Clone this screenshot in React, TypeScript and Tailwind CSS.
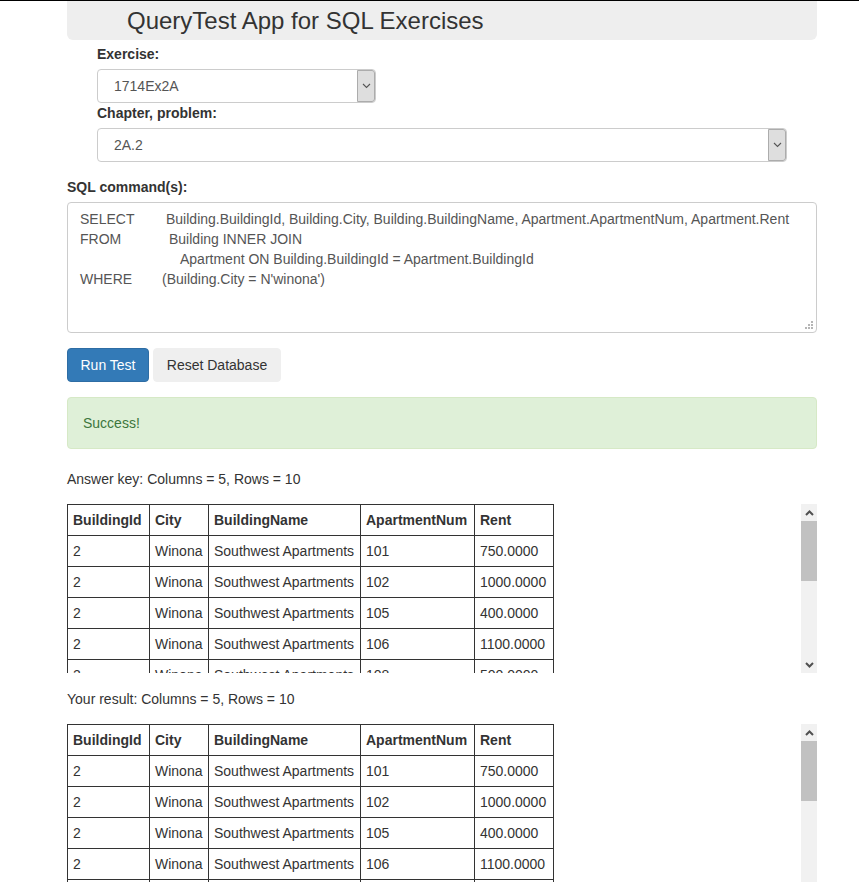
const rows = [
  ["2", "Winona", "Southwest Apartments", "101", "750.0000"],
  ["2", "Winona", "Southwest Apartments", "102", "1000.0000"],
  ["2", "Winona", "Southwest Apartments", "105", "400.0000"],
  ["2", "Winona", "Southwest Apartments", "106", "1100.0000"],
  ["2", "Winona", "Southwest Apartments", "108", "500.0000"],
  ["2", "Winona", "Southwest Apartments", "201", "850.0000"],
  ["2", "Winona", "Southwest Apartments", "202", "900.0000"],
  ["2", "Winona", "Southwest Apartments", "203", "650.0000"],
  ["2", "Winona", "Southwest Apartments", "204", "700.0000"],
  ["2", "Winona", "Southwest Apartments", "205", "1200.0000"],
];

const columns = ["BuildingId", "City", "BuildingName", "ApartmentNum", "Rent"];
const colWidths = ["w-[82px]", "w-[59px]", "w-[152px]", "w-[114px]", "w-[79px]"];

function SelectArrow() {
  return (
    <div className="flex w-[18px] items-center justify-center self-stretch rounded-r-[3px] border border-[#acacac] bg-[#dedede]">
      <svg width="9" height="6" viewBox="0 0 9 6">
        <polyline points="1,1 4.5,4.5 8,1" fill="none" stroke="#555" strokeWidth="1.1" />
      </svg>
    </div>
  );
}

function FakeSelect({ value, width }: { value: string; width: string }) {
  return (
    <div className={`flex h-[34px] ${width} items-stretch rounded-[4px] border border-[#ccc] bg-white`}>
      <div className="flex flex-1 items-center pl-[16px] text-[#555]">{value}</div>
      <SelectArrow />
    </div>
  );
}

function Scrollbar() {
  return (
    <div className="flex h-full w-[16px] flex-col bg-[#f1f1f1]">
      <div className="flex h-[17px] items-center justify-center">
        <svg width="9" height="6" viewBox="0 0 9 6">
          <polyline points="1,5 4.5,1.5 8,5" fill="none" stroke="#505050" strokeWidth="2" />
        </svg>
      </div>
      <div className="h-[60px] bg-[#c1c1c1]" />
      <div className="flex-1" />
      <div className="flex h-[17px] items-center justify-center">
        <svg width="9" height="6" viewBox="0 0 9 6">
          <polyline points="1,1 4.5,4.5 8,1" fill="none" stroke="#505050" strokeWidth="2" />
        </svg>
      </div>
    </div>
  );
}

function ResultTable() {
  return (
    <div className="flex h-[169px] w-[750px]">
      <div className="flex-1 overflow-hidden">
        <table className="w-[487px] table-fixed border-collapse">
          <colgroup>
            {colWidths.map((w, i) => (
              <col key={i} className={w} />
            ))}
          </colgroup>
          <thead>
            <tr>
              {columns.map((c) => (
                <th key={c} className="border border-[#333] px-[5px] py-[5px] text-left font-bold leading-[20px] whitespace-nowrap">
                  {c}
                </th>
              ))}
            </tr>
          </thead>
          <tbody>
            {rows.map((r, i) => (
              <tr key={i}>
                {r.map((cell, j) => (
                  <td key={j} className="border border-[#333] px-[5px] py-[5px] leading-[20px] whitespace-nowrap">
                    {cell}
                  </td>
                ))}
              </tr>
            ))}
          </tbody>
        </table>
      </div>
      <Scrollbar />
    </div>
  );
}

export default function App() {
  return (
    <div className="min-h-screen border-t border-black bg-white text-[14px] leading-[20px] text-[#333] [font-family:'Liberation_Sans',Arial,sans-serif]">
      <div className="ml-[67px] w-[750px]">
        {/* Title bar */}
        <div className="flex h-[39px] items-center rounded-b-[6px] bg-[#eee] pl-[60px]">
          <h1 className="text-[24px] leading-[28px] font-normal">QueryTest App for SQL Exercises</h1>
        </div>

        {/* Exercise pickers */}
        <div className="pl-[30px] pt-[4px]">
          <div className="mb-[5px] font-bold">Exercise:</div>
          <FakeSelect value="1714Ex2A" width="w-[279px]" />
          <div className="mb-[5px] font-bold">Chapter, problem:</div>
          <FakeSelect value="2A.2" width="w-[690px]" />
        </div>

        {/* SQL */}
        <div className="mt-[15px] mb-[5px] font-bold">SQL command(s):</div>
        <div className="relative h-[131px] rounded-[4px] border border-[#ccc] px-[12px] py-[6px] whitespace-pre text-[#555]">
          <div>
            <span className="inline-block w-[86px]">SELECT</span>
            Building.BuildingId, Building.City, Building.BuildingName, Apartment.ApartmentNum, Apartment.Rent
          </div>
          <div>
            <span className="inline-block w-[89px]">FROM</span>
            Building INNER JOIN
          </div>
          <div className="pl-[100px]">Apartment ON Building.BuildingId = Apartment.BuildingId</div>
          <div>
            <span className="inline-block w-[82px]">WHERE</span>
            (Building.City = N'winona')
          </div>
          <svg className="absolute right-[3px] bottom-[3px]" width="8" height="8" viewBox="0 0 8 8">
            <rect x="6" y="0" width="2" height="2" fill="#b5b5b5" />
            <rect x="3" y="3" width="2" height="2" fill="#b5b5b5" />
            <rect x="6" y="3" width="2" height="2" fill="#b5b5b5" />
            <rect x="0" y="6" width="2" height="2" fill="#b5b5b5" />
            <rect x="3" y="6" width="2" height="2" fill="#b5b5b5" />
            <rect x="6" y="6" width="2" height="2" fill="#b5b5b5" />
          </svg>
        </div>

        {/* Buttons */}
        <div className="mt-[15px] flex gap-[4px]">
          <button className="h-[34px] w-[82px] rounded-[4px] border border-[#2e6da4] bg-[#337ab7] text-white">
            Run Test
          </button>
          <button className="h-[34px] w-[128px] rounded-[4px] border border-[#efefef] bg-[#efefef] text-[#333]">
            Reset Database
          </button>
        </div>

        {/* Alert */}
        <div className="mt-[15px] rounded-[4px] border border-[#d6e9c6] bg-[#dff0d8] p-[15px] text-[#3c763d]">
          Success!
        </div>

        <div className="mt-[20px] mb-[15px]">Answer key: Columns = 5, Rows = 10</div>
        <ResultTable />

        <div className="mt-[16px] mb-[15px]">Your result: Columns = 5, Rows = 10</div>
        <ResultTable />
      </div>
    </div>
  );
}
